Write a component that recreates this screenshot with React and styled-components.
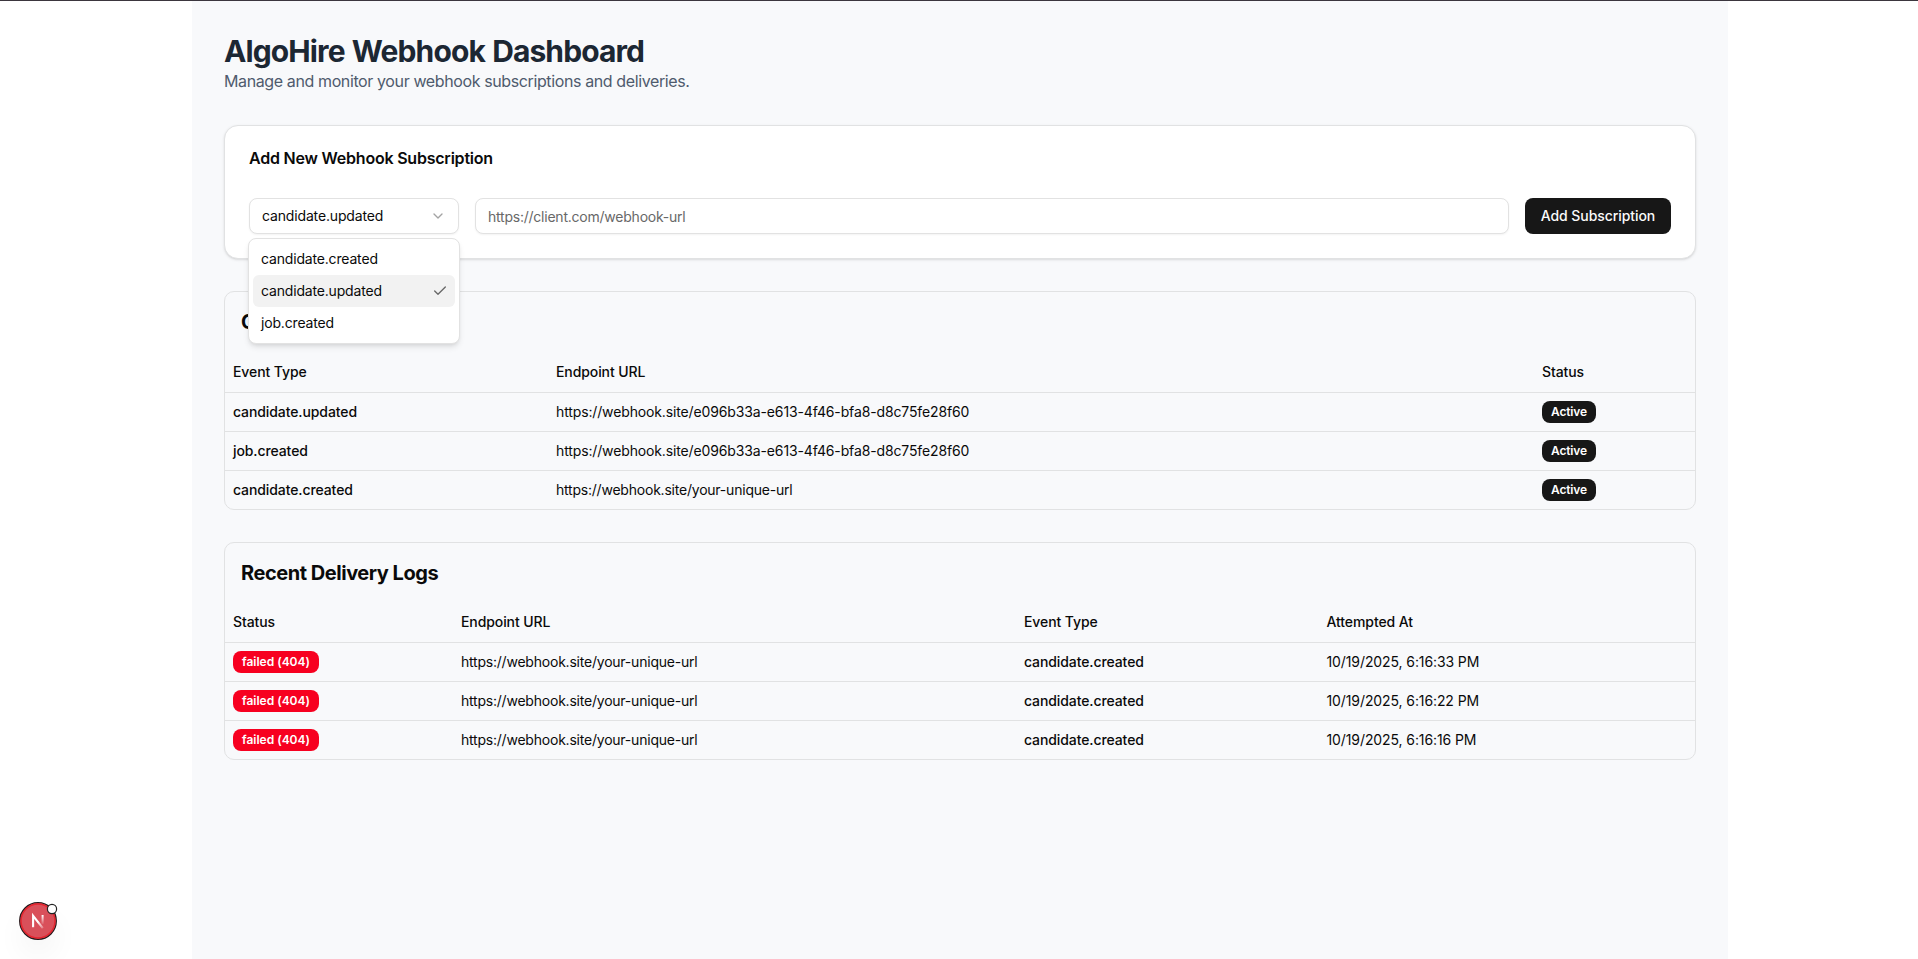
import React from "react";
import styled, { createGlobalStyle } from "styled-components";

const GlobalStyle = createGlobalStyle`
  *, *::before, *::after { box-sizing: border-box; }
  body {
    margin: 0;
    background: #fff;
    color: #0a0a0a;
    font-family: Inter, "Liberation Sans", sans-serif;
    -webkit-font-smoothing: antialiased;
  }
  h1, h2, h3, p { margin: 0; }
`;

const Shell = styled.div`
  display: flex;
  padding-left: 192px;
  height: 959px;
  overflow: hidden;
  border-top: 1px solid #3b363e;
`;

const Page = styled.main`
  display: flex;
  flex-direction: column;
  gap: 32px;
  width: 1536px;
  padding: 32px;
  background: #f8f9fb;
`;

const Title = styled.h1`
  font-size: 30px;
  line-height: 36px;
  font-weight: 700;
  letter-spacing: -0.89px;
  word-spacing: 1px;
  color: #1c2733;
`;

const Subtitle = styled.p`
  font-size: 16px;
  line-height: 24px;
  letter-spacing: -0.385px;
  color: #4f5b6d;
`;

const Card = styled.section`
  display: flex;
  flex-direction: column;
  gap: 32px;
  padding: 24px;
  border: 1px solid #e1e2e3;
  border-radius: 14px;
  background: #fff;
  box-shadow: 0 1px 3px rgba(0, 0, 0, 0.1), 0 1px 2px -1px rgba(0, 0, 0, 0.1);
`;

const CardTitle = styled.h2`
  font-size: 16px;
  line-height: 16px;
  font-weight: 600;
  letter-spacing: -0.217px;
`;

const FormRow = styled.form`
  display: flex;
  gap: 16px;
  height: 36px;
`;

const SelectRoot = styled.div`
  position: relative;
  width: 210px;
`;

const SelectTrigger = styled.button`
  display: flex;
  align-items: center;
  justify-content: space-between;
  width: 100%;
  height: 36px;
  padding: 0 12px;
  border: 1px solid #e2e2e2;
  border-radius: 8px;
  background: #fff;
  color: inherit;
  font: 400 14px/20px Inter, "Liberation Sans", sans-serif;
  letter-spacing: -0.15px;
  box-shadow: 0 1px 2px rgba(0, 0, 0, 0.05);
`;

const Menu = styled.ul`
  position: absolute;
  z-index: 5;
  top: 40px;
  left: -1px;
  width: 212px;
  margin: 0;
  padding: 4px;
  list-style: none;
  border: 1px solid #e2e2e2;
  border-radius: 8px;
  background: #fff;
  box-shadow: 0 4px 6px -1px rgba(0, 0, 0, 0.1), 0 2px 4px -2px rgba(0, 0, 0, 0.1);
`;

const MenuItem = styled.li`
  display: flex;
  align-items: center;
  justify-content: space-between;
  height: 32px;
  padding: 0 7px 0 8px;
  border-radius: 6px;
  background: ${(p) => (p.$selected ? "#f2f2f2" : "transparent")};
  font-size: 14px;
  line-height: 20px;
  letter-spacing: -0.17px;
`;

const UrlInput = styled.input`
  flex: 1;
  min-width: 0;
  height: 36px;
  padding: 0 12px;
  border: 1px solid #e2e2e2;
  border-radius: 8px;
  background: #fff;
  outline: none;
  font: 400 14px/20px Inter, "Liberation Sans", sans-serif;
  letter-spacing: -0.23px;
  box-shadow: 0 1px 2px rgba(0, 0, 0, 0.05);
  &::placeholder { color: #686868; opacity: 1; }
`;

const SubmitButton = styled.button`
  width: 146px;
  height: 36px;
  padding: 0;
  border: 0;
  border-radius: 8px;
  background: #171717;
  color: #fafafa;
  font: 500 14px/20px Inter, "Liberation Sans", sans-serif;
  letter-spacing: -0.07px;
`;

const Panel = styled.section`
  border: 1px solid #e1e2e3;
  border-radius: 10px;
  overflow: hidden;
`;

const PanelTitle = styled.h3`
  padding: 16px;
  font-size: 20px;
  line-height: 28px;
  font-weight: 700;
  letter-spacing: -0.46px;
`;

const Table = styled.table`
  width: 100%;
  table-layout: fixed;
  border-spacing: 0;
  font-size: 14px;
  line-height: 20px;
`;

const Col = styled.col`
  width: ${(p) => p.$width};
`;

const HeadCell = styled.th`
  height: ${(p) => p.$height}px;
  padding: 0 8px ${(p) => (p.$height === 40 ? 2 : 1)}px;
  border-bottom: 1px solid #e1e2e3;
  text-align: left;
  font-weight: 500;
  letter-spacing: -0.09px;
`;

const Cell = styled.td`
  height: 39px;
  padding: 0 8px;
  border-bottom: 1px solid #e1e2e3;
  font-weight: ${(p) => (p.$strong ? 500 : 400)};
  letter-spacing: ${(p) => p.$tracking || "-0.1px"};
  tr:last-child > & {
    height: 38px;
    border-bottom: 0;
  }
`;

const Badge = styled.span`
  display: flex;
  align-items: center;
  justify-content: center;
  width: ${(p) => (p.$failed ? 86 : 54)}px;
  height: 22px;
  border-radius: 8px;
  background: ${(p) => (p.$failed ? "#f70020" : "#171717")};
  color: #fff;
  font-size: 12px;
  line-height: 16px;
  font-weight: 600;
  letter-spacing: ${(p) => (p.$failed ? "-0.01px" : "-0.14px")};
`;

const DevIndicator = styled.div`
  position: fixed;
  left: 19px;
  top: 902px;
  width: 38px;
  height: 38px;
  border-radius: 50%;
  box-shadow: 0 16px 32px -8px rgba(0, 0, 0, 0.12);
  svg { display: block; overflow: visible; }
`;

const ChevronIcon = () => (
  <svg width="16" height="16" viewBox="0 0 24 24" fill="none" stroke="#a3a3a3" strokeWidth="2" strokeLinecap="round" strokeLinejoin="round">
    <path d="m6 9 6 6 6-6" />
  </svg>
);

const CheckIcon = () => (
  <svg width="16" height="16" viewBox="0 0 24 24" fill="none" stroke="#686868" strokeWidth="2" strokeLinecap="round" strokeLinejoin="round">
    <path d="M20 6 9 17l-5-5" />
  </svg>
);

const DevLogo = () => (
  <svg width="38" height="38" viewBox="0 0 38 38" fill="none">
    <defs>
      <linearGradient id="stem" x1="0" y1="13" x2="0" y2="23" gradientUnits="userSpaceOnUse">
        <stop stopColor="#fff" />
        <stop offset="1" stopColor="#fff" stopOpacity="0" />
      </linearGradient>
      <linearGradient id="diagonal" x1="19" y1="20" x2="25" y2="27.5" gradientUnits="userSpaceOnUse">
        <stop stopColor="#fff" />
        <stop offset="1" stopColor="#fff" stopOpacity="0.1" />
      </linearGradient>
    </defs>
    <circle cx="19" cy="19" r="18.3" fill="#d9505a" stroke="#26191c" strokeWidth="1.3" />
    <circle cx="19" cy="19" r="17" stroke="#e5252f" strokeWidth="1.4" />
    <path d="M14.1 25.2V13.8L23.8 26.2" stroke="url(#diagonal)" strokeWidth="2.1" />
    <rect x="22.6" y="13" width="2" height="9" fill="url(#stem)" />
    <circle cx="33" cy="7" r="4.6" fill="#fff" stroke="#222" strokeWidth="1.2" />
  </svg>
);

const EVENTS = ["candidate.created", "candidate.updated", "job.created"];
const SELECTED = "candidate.updated";

const SUBSCRIPTIONS = [
  ["candidate.updated", "https://webhook.site/e096b33a-e613-4f46-bfa8-d8c75fe28f60", "-0.134px"],
  ["job.created", "https://webhook.site/e096b33a-e613-4f46-bfa8-d8c75fe28f60", "-0.134px"],
  ["candidate.created", "https://webhook.site/your-unique-url", "-0.218px"],
];

const LOG_TIMES = ["10/19/2025, 6:16:33 PM", "10/19/2025, 6:16:22 PM", "10/19/2025, 6:16:16 PM"];

function DataTable({ columns, headHeight, children }) {
  return (
    <Table>
      <colgroup>
        {columns.map(([name, width]) => <Col key={name} $width={width} />)}
      </colgroup>
      <thead>
        <tr>
          {columns.map(([name]) => <HeadCell key={name} $height={headHeight}>{name}</HeadCell>)}
        </tr>
      </thead>
      <tbody>{children}</tbody>
    </Table>
  );
}

export default function App() {
  return (
    <>
      <GlobalStyle />
      <Shell>
        <Page>
          <header>
            <Title>AlgoHire Webhook Dashboard</Title>
            <Subtitle>Manage and monitor your webhook subscriptions and deliveries.</Subtitle>
          </header>

          <Card>
            <CardTitle>Add New Webhook Subscription</CardTitle>
            <FormRow>
              <SelectRoot>
                <SelectTrigger type="button">
                  {SELECTED}
                  <ChevronIcon />
                </SelectTrigger>
                <Menu>
                  {EVENTS.map((event) => (
                    <MenuItem key={event} $selected={event === SELECTED}>
                      {event}
                      {event === SELECTED && <CheckIcon />}
                    </MenuItem>
                  ))}
                </Menu>
              </SelectRoot>
              <UrlInput placeholder="https://client.com/webhook-url" />
              <SubmitButton type="button">Add Subscription</SubmitButton>
            </FormRow>
          </Card>

          <Panel>
            <PanelTitle>Current Subscriptions</PanelTitle>
            <DataTable
              headHeight={41}
              columns={[["Event Type", "323px"], ["Endpoint URL", "986px"], ["Status", "auto"]]}
            >
              {SUBSCRIPTIONS.map(([event, url, tracking]) => (
                <tr key={event}>
                  <Cell $strong>{event}</Cell>
                  <Cell $tracking={tracking}>{url}</Cell>
                  <Cell><Badge>Active</Badge></Cell>
                </tr>
              ))}
            </DataTable>
          </Panel>

          <Panel>
            <PanelTitle>Recent Delivery Logs</PanelTitle>
            <DataTable
              headHeight={40}
              columns={[["Status", "228px"], ["Endpoint URL", "563px"], ["Event Type", "302.5px"], ["Attempted At", "auto"]]}
            >
              {LOG_TIMES.map((time) => (
                <tr key={time}>
                  <Cell><Badge $failed>failed (404)</Badge></Cell>
                  <Cell $tracking="-0.218px">https://webhook.site/your-unique-url</Cell>
                  <Cell $strong>candidate.created</Cell>
                  <Cell>{time}</Cell>
                </tr>
              ))}
            </DataTable>
          </Panel>
        </Page>
      </Shell>
      <DevIndicator>
        <DevLogo />
      </DevIndicator>
    </>
  );
}
